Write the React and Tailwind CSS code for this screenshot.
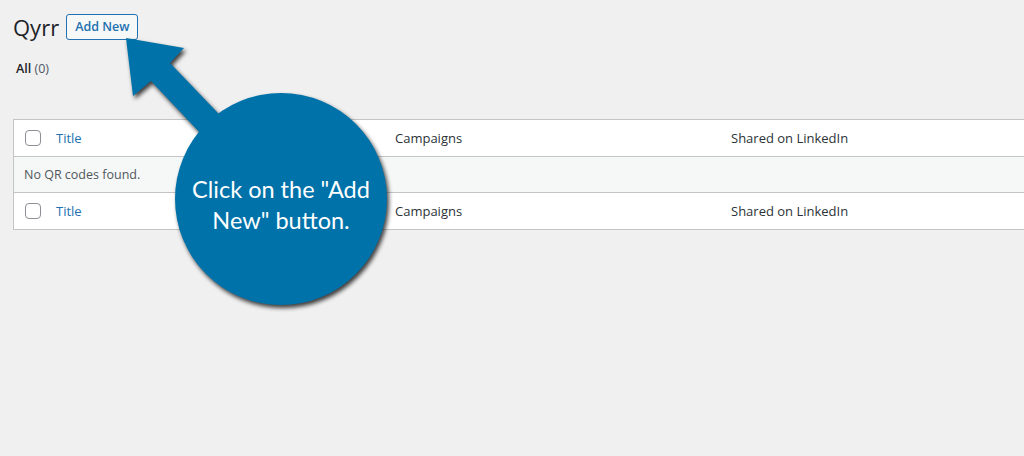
import React from "react";

function Checkbox() {
  return <span className="block w-4 h-4 rounded-[4px] border border-[#8c8f94] bg-white" />;
}

function Row() {
  return (
    <div className="grid grid-cols-[42px_339px_336px_1fr] items-center h-[36px] pt-[2px] text-[13px] text-[#2c3338]">
      <div className="pl-[11px] flex items-center -mt-[2px]"><Checkbox /></div>
      <div className="text-[#2271b1]">Title</div>
      <div>Campaigns</div>
      <div>Shared on LinkedIn</div>
    </div>
  );
}

export default function App() {
  return (
    <div className="relative w-full h-[456px] overflow-hidden bg-[#f0f0f1] font-['Open_Sans','Noto_Sans',sans-serif]">
      <div className="pl-[13px] pt-[13px]">
        <div className="flex items-center gap-[7px]">
          <h1 className="text-[22px] leading-[28px] text-[#1d2327] font-normal">Qyrr</h1>
          <button className="h-[26px] px-[8px] border border-[#2271b1] rounded-[3px] bg-[#f6f7f7] text-[#2271b1] text-[12.5px] font-semibold leading-none">
            Add New
          </button>
        </div>
        <div className="mt-[18px] pl-[3px] text-[12.5px] leading-[20px]">
          <span className="text-[#1d2327] font-semibold">All</span>{" "}
          <span className="text-[#50575e]">(0)</span>
        </div>
        <div className="mt-[40px] w-[1040px] border border-[#c3c4c7] bg-white">
          <Row />
          <div className="h-[37px] pt-[2px] border-t border-b border-[#c3c4c7] bg-[#f6f7f7] flex items-center pl-[10px] text-[12.5px] text-[#50575e]">
            No QR codes found.
          </div>
          <Row />
        </div>
      </div>

      <svg
        className="absolute left-0 top-0 drop-shadow-[2px_3px_2px_rgba(0,0,0,0.75)]"
        width="1024"
        height="456"
        viewBox="0 0 1024 456"
      >
        <g fill="#0072aa">
          <polygon points="126,38 184,48 170,63 240,136 220,154 151,81 133,96" />
          <circle cx="281" cy="199" r="106" />
        </g>
      </svg>
      <div className="absolute left-[175px] top-[174px] w-[212px] text-center text-white text-[23.5px] leading-[31px] font-['Lato','Open_Sans',sans-serif]">
        Click on the "Add
        <br />
        New" button.
      </div>
    </div>
  );
}
